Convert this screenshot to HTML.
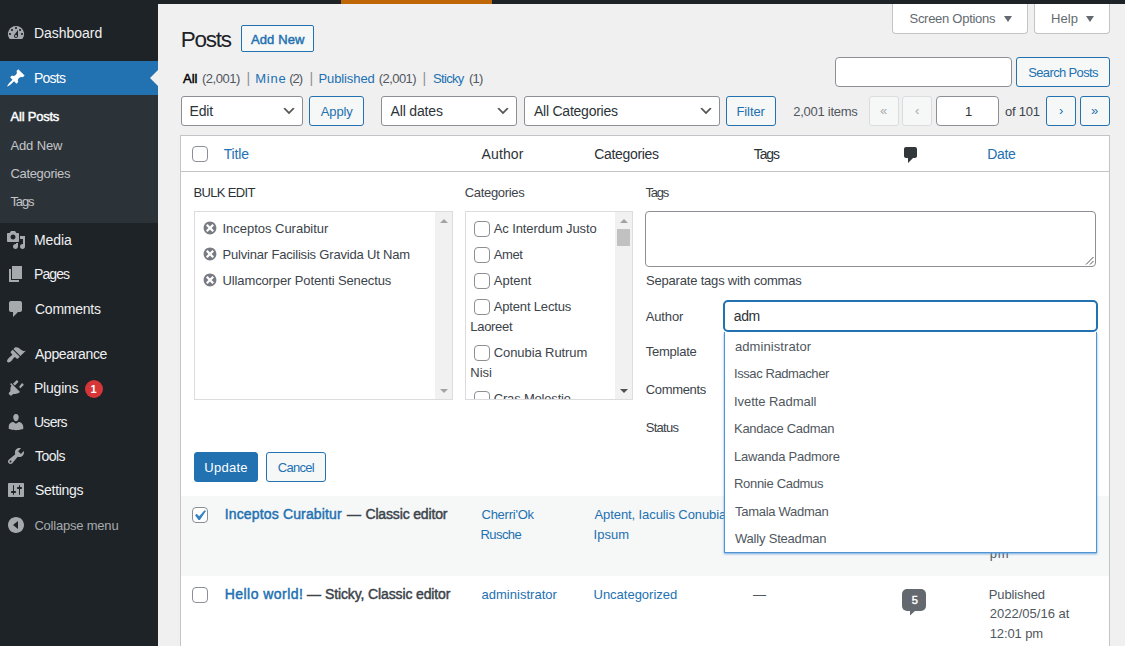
<!DOCTYPE html>
<html lang="en">
<head>
<meta charset="utf-8">
<title>Posts</title>
<style>
*{box-sizing:border-box;margin:0;padding:0}
html,body{width:1125px;height:646px;overflow:hidden;background:#f0f0f1}
body{position:relative;font-family:"Liberation Sans",sans-serif;font-size:13px;color:#3c434a;line-height:20px}
.a{position:absolute}
.t{position:absolute;white-space:nowrap;line-height:20px;font-size:13px}
#side{left:0;top:0;width:158px;height:646px;background:#1d2327}
#topbar{left:0;top:0;width:1125px;height:4px;background:#1d2327}
#orange{left:341px;top:0;width:151px;height:4px;background:#bf6606}
#cur{left:0;top:61px;width:158px;height:34px;background:#2271b1}
#cur:after{content:"";position:absolute;right:0;top:9px;border:8px solid transparent;border-right-color:#f0f0f1}
#sub{left:0;top:95px;width:158px;height:128px;background:#2c3338}
.ic{position:absolute;left:6px;width:20px;height:20px;fill:#a7aaad}
.badge{left:85px;top:380px;width:18px;height:18px;border-radius:9px;background:#d63638}
.btn{position:absolute;border:1px solid #2271b1;border-radius:3px;background:#f6f7f7}
.sel{position:absolute;top:96px;height:30px;border:1px solid #8c8f94;border-radius:3px;background:#fff}
.sel svg{position:absolute;right:5px;top:6px;width:16px;height:16px}
.inp{position:absolute;border:1px solid #8c8f94;border-radius:4px;background:#fff}
.cb{position:absolute;width:16px;height:16px;border:1px solid #8c8f94;border-radius:4px;background:#fff}
.pg{position:absolute;top:96px;height:30px;border-radius:3px}
.pg.dis{border:1px solid #dcdcde;background:#f6f7f7}
.pg.en{border:1px solid #2271b1;background:#f6f7f7}
.tab{position:absolute;top:4px;height:30px;border:1px solid #c3c4c7;border-top:none;border-radius:0 0 4px 4px;background:#fff}
.tri{position:absolute;width:0;height:0;border-left:4px solid transparent;border-right:4px solid transparent;border-top:6px solid #646970}
.box{position:absolute;top:211px;height:189px;border:1px solid #dcdcde;background:#fff}
.sb{position:absolute;top:0;right:0;width:17px;height:187px;background:#f1f1f1}
.dm{position:absolute;left:202px;width:16px;height:16px}
</style>
</head>
<body>
<div class="a" id="side"></div>
<div class="a" id="topbar"></div>
<div class="a" id="orange"></div>
<div class="a" id="cur"></div>
<div class="a" id="sub"></div>

<!-- sidebar icons -->
<svg class="ic" style="top:23px" viewBox="0 0 20 20"><path d="M3.76 16h12.48A7.998 7.998 0 0 0 10 3a7.998 7.998 0 0 0-6.24 13zM10 4c.55 0 1 .45 1 1s-.45 1-1 1-1-.45-1-1 .45-1 1-1zM6 6c.55 0 1 .45 1 1s-.45 1-1 1-1-.45-1-1 .45-1 1-1zm8 0c.55 0 1 .45 1 1s-.45 1-1 1-1-.45-1-1 .45-1 1-1zm-5.37 5.55L12 7v6c0 1.1-.9 2-2 2s-2-.9-2-2c0-.57.24-1.08.63-1.45zM4 10c.55 0 1 .45 1 1s-.45 1-1 1-1-.45-1-1 .45-1 1-1zm12 0c.55 0 1 .45 1 1s-.45 1-1 1-1-.45-1-1 .45-1 1-1zm-5 3c0-.55-.45-1-1-1s-1 .45-1 1 .45 1 1 1 1-.45 1-1z"/></svg>
<svg class="ic" style="top:68px;fill:#fff" viewBox="0 0 20 20"><path d="M10.44 3.02l1.82-1.82 6.36 6.35-1.83 1.82c-1.05-.68-2.48-.57-3.41.36l-.75.75c-.92.93-1.04 2.35-.35 3.41l-1.83 1.82-2.41-2.41-2.8 2.79c-.42.42-3.38 2.71-3.8 2.29s1.86-3.39 2.28-3.81l2.79-2.79L4.1 9.36l1.83-1.82c1.05.69 2.48.57 3.4-.36l.75-.75c.93-.92 1.05-2.35.36-3.41z"/></svg>
<svg class="ic" style="top:230px" viewBox="0 0 20 20"><path d="M13 11V4c0-.55-.45-1-1-1h-1.67L9 1H5L3.67 3H2c-.55 0-1 .45-1 1v7c0 .55.45 1 1 1h10c.55 0 1-.45 1-1zM7 4.5c1.38 0 2.5 1.12 2.5 2.5S8.38 9.5 7 9.5 4.5 8.38 4.5 7 5.62 4.5 7 4.5zM14 6h5v10.5c0 1.38-1.12 2.5-2.5 2.5S14 17.88 14 16.5s1.12-2.5 2.5-2.5c.17 0 .34.02.5.05V9h-3V6zm-4 8.050V13h2v3.5c0 1.38-1.12 2.5-2.5 2.5S7 17.88 7 16.5 8.120 14 9.5 14c.17 0 .34.02.5.05z"/></svg>
<svg class="ic" style="top:264px" viewBox="0 0 20 20"><path d="M6 15V2h10v13H6zm-1 1h8v2H3V5h2v11z"/></svg>
<svg class="ic" style="top:299px" viewBox="0 0 20 20"><path d="M5 2h9c1.1 0 2 .9 2 2v7c0 1.1-.9 2-2 2h-2l-5 5v-5H5c-1.1 0-2-.9-2-2V4c0-1.1.9-2 2-2z"/></svg>
<svg class="ic" style="top:344.5px" viewBox="0 0 20 20"><path d="M14.48 11.06L7.41 3.99l1.5-1.5c.5-.56 2.3-.47 3.51.32 1.21.8 1.43 1.28 2.91 2.1 1.18.64 2.45 1.26 4.45.85zm-.71.71L6.7 4.7 4.93 6.47c-.39.39-.39 1.02 0 1.410l1.060 1.060c.39.39.39 1.030 0 1.420-.6.6-1.430 1.110-2.210 1.690-.35.26-.7.53-1.010.84C1.430 14.230.4 16.080 1.4 17.070c.99 1 2.840-.030 4.180-1.360.31-.31.58-.66.85-1.020.57-.78 1.080-1.610 1.690-2.210.39-.39 1.020-.39 1.410 0l1.060 1.060c.39.39 1.020.39 1.410 0z"/></svg>
<svg class="ic" style="top:378px;left:5px" viewBox="0 0 20 20"><path d="M13.11 4.36L9.87 7.6 8 5.73l3.24-3.24c.35-.34 1.05-.2 1.56.32.52.51.66 1.21.31 1.55zm-8 1.770l.91-1.120 9.010 9.010-1.190.84c-.71.71-2.630 1.160-3.820 1.160H8.100l-1.250 1.260c-.5.5-1.340.5-1.830 0l-.91-.91c-.49-.49-.49-1.320 0-1.830l1.260-1.260v-1.910c0-1.190.45-3.110 1.160-3.820zm9.010 2.630L16.590 5.500c.34-.35 1.040-.21 1.560.31.51.52.65 1.210.31 1.560l-3.240 3.240z"/></svg>
<div class="a badge"></div>
<svg class="ic" style="top:412px" viewBox="0 0 20 20"><path d="M10 9.25c-2.27 0-2.73-3.44-2.73-3.44C7 4.020 7.820 2 9.970 2c2.160 0 2.980 2.020 2.710 3.810 0 0-.41 3.440-2.680 3.440zm0 2.570L12.720 10c2.390 0 4.520 2.330 4.520 4.530v2.490s-3.650 1.130-7.240 1.130c-3.650 0-7.240-1.130-7.240-1.130v-2.490c0-2.250 1.940-4.480 4.470-4.480z"/></svg>
<svg class="ic" style="top:446px" viewBox="0 0 20 20"><path d="M16.68 9.770c-1.340 1.340-3.300 1.670-4.950.99l-5.410 6.520c-.99.99-2.590.99-3.580 0s-.99-2.590 0-3.570l6.520-5.420c-.68-1.650-.35-3.610.99-4.950 1.280-1.280 3.120-1.620 4.720-1.060l-2.890 2.890 2.820 2.820 2.860-2.870c.53 1.580.18 3.390-1.080 4.650zM3.810 16.210c.4.39 1.040.39 1.430 0 .4-.4.4-1.040 0-1.430-.39-.4-1.030-.4-1.430 0-.39.39-.39 1.030 0 1.430z"/></svg>
<svg class="ic" style="top:480px" viewBox="0 0 20 20"><path d="M18 16V4c0-.55-.45-1-1-1H3c-.55 0-1 .45-1 1v12c0 .55.45 1 1 1h14c.55 0 1-.45 1-1zM8 11h1c.55 0 1 .45 1 1s-.45 1-1 1H8v1.500c0 .28-.22.5-.5.5s-.5-.22-.5-.5V13H6c-.55 0-1-.45-1-1s.45-1 1-1h1V5.500c0-.28.22-.5.5-.5s.5.22.5.5V11zm5-2h-1c-.55 0-1-.45-1-1s.45-1 1-1h1V5.500c0-.28.22-.5.5-.5s.5.22.5.5V7h1c.55 0 1 .45 1 1s-.45 1-1 1h-1v5.500c0 .28-.22.5-.5.5s-.5-.22-.5-.5V9z"/></svg>
<svg class="ic" style="top:515px" viewBox="0 0 20 20"><path d="M10 2c4.420 0 8 3.580 8 8s-3.580 8-8 8-8-3.580-8-8 3.580-8 8-8zm2 12V6l-5 4z"/></svg>

<!-- screen options / help -->
<div class="tab" style="left:892px;width:136px"></div>
<div class="tab" style="left:1034px;width:76px"></div>
<div class="tri" style="left:1004px;top:16px"></div>
<div class="tri" style="left:1086px;top:16px"></div>

<!-- heading button -->
<div class="btn" style="left:241px;top:25px;width:73px;height:27px;border-radius:2px"></div>
<!-- search -->
<div class="inp" style="left:835px;top:57px;width:177px;height:30px"></div>
<div class="btn" style="left:1016px;top:57px;width:94px;height:30px"></div>
<!-- tablenav -->
<div class="sel" style="left:181px;width:122px"><svg viewBox="0 0 20 20"><path d="M5 6l5 5 5-5 2 1-7 7-7-7 2-1z" fill="#555"/></svg></div>
<div class="btn" style="left:309px;top:96px;width:55px;height:30px"></div>
<div class="sel" style="left:381px;width:136px"><svg viewBox="0 0 20 20"><path d="M5 6l5 5 5-5 2 1-7 7-7-7 2-1z" fill="#555"/></svg></div>
<div class="sel" style="left:524px;width:196px"><svg viewBox="0 0 20 20"><path d="M5 6l5 5 5-5 2 1-7 7-7-7 2-1z" fill="#555"/></svg></div>
<div class="btn" style="left:726px;top:96px;width:50px;height:30px"></div>
<div class="pg dis" style="left:869px;width:30px"></div>
<div class="pg dis" style="left:902px;width:30px"></div>
<div class="inp" style="left:936px;top:96px;width:63px;height:30px"></div>
<div class="pg en" style="left:1046px;width:30px"></div>
<div class="pg en" style="left:1080px;width:30px"></div>
<span class="t" style="left:880px;top:101px;font-size:13px;color:#a7aaad">«</span>
<span class="t" style="left:915px;top:101px;font-size:13px;color:#a7aaad">‹</span>
<span class="t" style="left:1059px;top:101px;font-size:13px;color:#2271b1">›</span>
<span class="t" style="left:1091px;top:101px;font-size:13px;color:#2271b1">»</span>

<!-- table -->
<div class="a" style="left:180px;top:135px;width:930px;height:521px;border:1px solid #c3c4c7;background:#fff"></div>
<div class="a" style="left:181px;top:171px;width:928px;height:1px;background:#c3c4c7"></div>
<div class="a" style="left:181px;top:496px;width:928px;height:80px;background:#f6f7f7"></div>
<div class="cb" style="left:192px;top:146px"></div>
<svg class="a" style="left:901px;top:145px;width:20px;height:20px" viewBox="0 0 20 20"><path fill="#32373c" d="M5 2h9c1.1 0 2 .9 2 2v7c0 1.1-.9 2-2 2h-2l-5 5v-5H5c-1.1 0-2-.9-2-2V4c0-1.1.9-2 2-2z"/></svg>

<!-- bulk edit boxes -->
<div class="box" style="left:194px;width:259px"><div class="sb"></div>
 <svg class="a" style="left:245px;top:7px;width:8px;height:4px" viewBox="0 0 8 4"><path d="M0 4L4 0l4 4z" fill="#a3a3a3"/></svg>
 <svg class="a" style="left:245px;top:177px;width:8px;height:4px" viewBox="0 0 8 4"><path d="M0 0l4 4 4-4z" fill="#a3a3a3"/></svg>
</div>
<svg class="dm" style="top:220px" viewBox="0 0 20 20"><path fill="#787c82" d="M10 2c4.420 0 8 3.580 8 8s-3.580 8-8 8-8-3.580-8-8 3.580-8 8-8zm5 11l-3-3 3-3-2-2-3 3-3-3-2 2 3 3-3 3 2 2 3-3 3 3z"/></svg>
<svg class="dm" style="top:246px" viewBox="0 0 20 20"><path fill="#787c82" d="M10 2c4.420 0 8 3.580 8 8s-3.580 8-8 8-8-3.580-8-8 3.580-8 8-8zm5 11l-3-3 3-3-2-2-3 3-3-3-2 2 3 3-3 3 2 2 3-3 3 3z"/></svg>
<svg class="dm" style="top:272px" viewBox="0 0 20 20"><path fill="#787c82" d="M10 2c4.420 0 8 3.580 8 8s-3.580 8-8 8-8-3.580-8-8 3.580-8 8-8zm5 11l-3-3 3-3-2-2-3 3-3-3-2 2 3 3-3 3 2 2 3-3 3 3z"/></svg>

<div class="box" style="left:465px;width:168px"><div class="sb"></div>
 <div class="a" style="right:2px;top:17px;width:13px;height:17px;background:#c1c1c1"></div>
 <svg class="a" style="left:154px;top:7px;width:8px;height:4px" viewBox="0 0 8 4"><path d="M0 4L4 0l4 4z" fill="#a3a3a3"/></svg>
 <svg class="a" style="left:154px;top:177px;width:8px;height:4px" viewBox="0 0 8 4"><path d="M0 0l4 4 4-4z" fill="#505050"/></svg>
</div>
<div class="cb" style="left:474px;top:221px"></div>
<div class="cb" style="left:474px;top:247px"></div>
<div class="cb" style="left:474px;top:273px"></div>
<div class="cb" style="left:474px;top:299px"></div>
<div class="cb" style="left:474px;top:345px"></div>
<div class="a" style="left:0;top:0;width:1125px;height:399px;overflow:hidden">
<div class="cb" style="left:474px;top:391px"></div>
<span class="t" style="left:493.75px;top:389px;font-size:13px;color:#3c434a;letter-spacing:-0.186px">Cras Molestie</span>
</div>

<!-- tags textarea -->
<div class="inp" style="left:645px;top:211px;width:451px;height:56px"></div>
<svg class="a" style="left:1084px;top:255px;width:10px;height:10px" viewBox="0 0 10 10"><path d="M2 9.500L9.500 2M6 9.500L9.500 6" stroke="#555" stroke-width="1" fill="none"/></svg>
<!-- author input -->
<div class="a" style="left:723px;top:300px;width:375px;height:32px;border:2px solid #2271b1;border-radius:5px;background:#fff"></div>

<!-- buttons -->
<div class="btn" style="left:194px;top:452px;width:64px;height:30px;background:#2271b1"></div>
<div class="btn" style="left:266px;top:452px;width:60px;height:30px"></div>

<!-- rows -->
<div class="cb" style="left:192px;top:507px"></div>
<svg class="a" style="left:189px;top:505px;width:21px;height:21px" viewBox="0 0 20 20"><path d="M14.83 4.890l1.340.94-5.810 8.380H9.020L5.780 9.670l1.340-1.250 2.570 2.400z" fill="#3582c4"/></svg>
<div class="cb" style="left:192px;top:587px"></div>
<!-- comment bubble -->
<div class="a" style="left:902px;top:589px;width:24px;height:22px;border-radius:5px;background:#646970"></div>
<svg class="a" style="left:910px;top:610px;width:8px;height:6px" viewBox="0 0 8 6"><path d="M0 0h6L0 5.500z" fill="#646970"/></svg>
<span class="t" style="left:90.500px;top:379px;font-size:11px;font-weight:bold;color:#fff">1</span>

<span class="t" style="left:34.00px;top:23px;font-size:14px;color:#f0f0f1;letter-spacing:-0.038px">Dashboard</span>
<span class="t" style="left:34.00px;top:68px;font-size:14px;color:#fff;letter-spacing:-0.753px">Posts</span>
<span class="t" style="left:10.62px;top:107px;font-size:13px;color:#fff;letter-spacing:-0.240px;-webkit-text-stroke:0.45px">All Posts</span>
<span class="t" style="left:10.40px;top:136px;font-size:13px;color:#c3c4c7;letter-spacing:-0.127px">Add New</span>
<span class="t" style="left:10.40px;top:164px;font-size:13px;color:#c3c4c7;letter-spacing:-0.307px">Categories</span>
<span class="t" style="left:10.40px;top:192px;font-size:13px;color:#c3c4c7;letter-spacing:-1.120px">Tags</span>
<span class="t" style="left:34.00px;top:230px;font-size:14px;color:#f0f0f1;letter-spacing:-0.086px">Media</span>
<span class="t" style="left:34.00px;top:264px;font-size:14px;color:#f0f0f1;letter-spacing:-0.924px">Pages</span>
<span class="t" style="left:35.00px;top:299px;font-size:14px;color:#f0f0f1;letter-spacing:-0.240px">Comments</span>
<span class="t" style="left:35.00px;top:344px;font-size:14px;color:#f0f0f1;letter-spacing:-0.346px">Appearance</span>
<span class="t" style="left:34.00px;top:378px;font-size:14px;color:#f0f0f1;letter-spacing:-0.219px">Plugins</span>
<span class="t" style="left:34.00px;top:412px;font-size:14px;color:#f0f0f1;letter-spacing:-0.740px">Users</span>
<span class="t" style="left:35.00px;top:446px;font-size:14px;color:#f0f0f1;letter-spacing:-0.521px">Tools</span>
<span class="t" style="left:35.00px;top:480px;font-size:14px;color:#f0f0f1;letter-spacing:-0.284px">Settings</span>
<span class="t" style="left:34.40px;top:516px;font-size:13px;color:#a7aaad;letter-spacing:-0.207px">Collapse menu</span>
<span class="t" style="left:180.75px;top:30px;font-size:22.5px;color:#1d2327;letter-spacing:-1.255px">Posts</span>
<span class="t" style="left:250.97px;top:30px;font-size:13px;color:#2271b1;letter-spacing:0.115px;-webkit-text-stroke:0.45px">Add New</span>
<span class="t" style="left:183.03px;top:69px;font-size:13px;color:#000;-webkit-text-stroke:0.45px">All</span>
<span class="t" style="left:202.00px;top:69px;font-size:13px;color:#50575e;letter-spacing:-0.477px">(2,001)</span>
<span class="t" style="left:246.50px;top:68px;font-size:14px;color:#8c8f94">|</span>
<span class="t" style="left:255.25px;top:69px;font-size:13px;color:#2271b1;letter-spacing:0.768px">Mine</span>
<span class="t" style="left:289.25px;top:69px;font-size:13px;color:#50575e;letter-spacing:-1.030px">(2)</span>
<span class="t" style="left:309.50px;top:68px;font-size:14px;color:#8c8f94">|</span>
<span class="t" style="left:318.50px;top:69px;font-size:13px;color:#2271b1;letter-spacing:-0.108px">Published</span>
<span class="t" style="left:378.75px;top:69px;font-size:13px;color:#50575e;letter-spacing:-0.560px">(2,001)</span>
<span class="t" style="left:422.50px;top:68px;font-size:14px;color:#8c8f94">|</span>
<span class="t" style="left:433.00px;top:69px;font-size:13px;color:#2271b1;letter-spacing:-0.674px">Sticky</span>
<span class="t" style="left:469.00px;top:69px;font-size:13px;color:#50575e;letter-spacing:-0.780px">(1)</span>
<span class="t" style="left:909.50px;top:9px;font-size:13px;color:#646970;letter-spacing:-0.277px">Screen Options</span>
<span class="t" style="left:1051.00px;top:9px;font-size:13px;color:#646970;letter-spacing:0.081px">Help</span>
<span class="t" style="left:1028.25px;top:63px;font-size:13px;color:#2271b1;letter-spacing:-0.642px">Search Posts</span>
<span class="t" style="left:189.50px;top:101px;font-size:14px;color:#2c3338;letter-spacing:-0.161px">Edit</span>
<span class="t" style="left:320.75px;top:102px;font-size:13px;color:#2271b1;letter-spacing:-0.130px">Apply</span>
<span class="t" style="left:390.50px;top:101px;font-size:14px;color:#2c3338;letter-spacing:-0.150px">All dates</span>
<span class="t" style="left:534.00px;top:101px;font-size:14px;color:#2c3338;letter-spacing:-0.242px">All Categories</span>
<span class="t" style="left:736.50px;top:102px;font-size:13px;color:#2271b1;letter-spacing:-0.112px">Filter</span>
<span class="t" style="left:793.25px;top:102px;font-size:13px;color:#50575e;letter-spacing:-0.270px">2,001 items</span>
<span class="t" style="left:965.00px;top:102px;font-size:13px;color:#2c3338">1</span>
<span class="t" style="left:1005.00px;top:102px;font-size:13px;color:#3c434a;letter-spacing:-0.233px">of 101</span>
<span class="t" style="left:223.75px;top:144px;font-size:14px;color:#2271b1;letter-spacing:-0.161px">Title</span>
<span class="t" style="left:481.50px;top:144px;font-size:14px;color:#2c3338;letter-spacing:0.133px">Author</span>
<span class="t" style="left:594.25px;top:144px;font-size:14px;color:#2c3338;letter-spacing:-0.328px">Categories</span>
<span class="t" style="left:753.75px;top:144px;font-size:14px;color:#2c3338;letter-spacing:-1.107px">Tags</span>
<span class="t" style="left:987.25px;top:144px;font-size:14px;color:#2271b1;letter-spacing:-0.345px">Date</span>
<span class="t" style="left:193.50px;top:183px;font-size:13px;color:#2c3338;letter-spacing:-0.655px">BULK EDIT</span>
<span class="t" style="left:464.75px;top:183px;font-size:13px;color:#3c434a;letter-spacing:-0.319px">Categories</span>
<span class="t" style="left:645.50px;top:183px;font-size:13px;color:#3c434a;letter-spacing:-1.237px">Tags</span>
<span class="t" style="left:222.50px;top:219px;font-size:13px;color:#3c434a;letter-spacing:-0.023px">Inceptos Curabitur</span>
<span class="t" style="left:222.50px;top:245px;font-size:13px;color:#3c434a;letter-spacing:-0.188px">Pulvinar Facilisis Gravida Ut Nam</span>
<span class="t" style="left:222.50px;top:271px;font-size:13px;color:#3c434a;letter-spacing:-0.119px">Ullamcorper Potenti Senectus</span>
<span class="t" style="left:493.75px;top:219px;font-size:13px;color:#3c434a;letter-spacing:-0.112px">Ac Interdum Justo</span>
<span class="t" style="left:493.75px;top:245px;font-size:13px;color:#3c434a;letter-spacing:-0.410px">Amet</span>
<span class="t" style="left:493.75px;top:271px;font-size:13px;color:#3c434a;letter-spacing:0.005px">Aptent</span>
<span class="t" style="left:493.75px;top:297px;font-size:13px;color:#3c434a;letter-spacing:-0.167px">Aptent Lectus</span>
<span class="t" style="left:470.25px;top:317px;font-size:13px;color:#3c434a;letter-spacing:-0.288px">Laoreet</span>
<span class="t" style="left:493.75px;top:343px;font-size:13px;color:#3c434a;letter-spacing:-0.083px">Conubia Rutrum</span>
<span class="t" style="left:470.25px;top:363px;font-size:13px;color:#3c434a;letter-spacing:-0.009px">Nisi</span>
<span class="t" style="left:646.00px;top:271px;font-size:13px;color:#3c434a;letter-spacing:-0.192px">Separate tags with commas</span>
<span class="t" style="left:645.75px;top:307px;font-size:13px;color:#3c434a;letter-spacing:-0.145px">Author</span>
<span class="t" style="left:645.75px;top:342px;font-size:13px;color:#3c434a;letter-spacing:-0.253px">Template</span>
<span class="t" style="left:645.75px;top:380px;font-size:13px;color:#3c434a;letter-spacing:-0.335px">Comments</span>
<span class="t" style="left:645.75px;top:418px;font-size:13px;color:#3c434a;letter-spacing:-0.721px">Status</span>
<span class="t" style="left:733.75px;top:306px;font-size:14px;color:#2c3338;letter-spacing:-0.411px">adm</span>
<span class="t" style="left:204.25px;top:458px;font-size:13px;color:#fff;letter-spacing:0.262px">Update</span>
<span class="t" style="left:277.75px;top:458px;font-size:13px;color:#2271b1;letter-spacing:-0.716px">Cancel</span>
<span class="t" style="left:224.72px;top:504px;font-size:14px;color:#2271b1;letter-spacing:0.151px;-webkit-text-stroke:0.45px">Inceptos Curabitur</span>
<span class="t" style="left:346.98px;top:504px;font-size:14px;color:#3c434a;-webkit-text-stroke:0.45px">—</span>
<span class="t" style="left:365.48px;top:504px;font-size:14px;color:#3c434a;letter-spacing:-0.159px;-webkit-text-stroke:0.45px">Classic editor</span>
<span class="t" style="left:481.50px;top:505px;font-size:13px;color:#2271b1;letter-spacing:-0.249px">Cherri'Ok</span>
<span class="t" style="left:480.50px;top:525px;font-size:13px;color:#2271b1;letter-spacing:-0.570px">Rusche</span>
<span class="t" style="left:594.50px;top:505px;font-size:13px;color:#2271b1;letter-spacing:-0.089px">Aptent, Iaculis Conubia</span>
<span class="t" style="left:593.50px;top:525px;font-size:13px;color:#2271b1;letter-spacing:0.045px">Ipsum</span>
<span class="t" style="left:989.75px;top:544px;font-size:13px;color:#50575e;letter-spacing:0.770px">pm</span>
<span class="t" style="left:224.72px;top:584px;font-size:14px;color:#2271b1;letter-spacing:0.459px;-webkit-text-stroke:0.45px">Hello world!</span>
<span class="t" style="left:306.98px;top:584px;font-size:14px;color:#3c434a;-webkit-text-stroke:0.45px">—</span>
<span class="t" style="left:324.98px;top:584px;font-size:14px;color:#3c434a;letter-spacing:-0.126px;-webkit-text-stroke:0.45px">Sticky, Classic editor</span>
<span class="t" style="left:481.50px;top:585px;font-size:13px;color:#2271b1;letter-spacing:0.016px">administrator</span>
<span class="t" style="left:593.50px;top:585px;font-size:13px;color:#2271b1;letter-spacing:-0.008px">Uncategorized</span>
<span class="t" style="left:753.00px;top:585px;font-size:13px;color:#50575e">—</span>
<span class="t" style="left:911.83px;top:590px;font-size:11px;color:#fff;-webkit-text-stroke:0.45px">5</span>
<span class="t" style="left:988.75px;top:585px;font-size:13px;color:#50575e;letter-spacing:-0.108px">Published</span>
<span class="t" style="left:989.75px;top:604px;font-size:13px;color:#50575e;letter-spacing:0.008px">2022/05/16 at</span>
<span class="t" style="left:989.75px;top:624px;font-size:13px;color:#50575e;letter-spacing:-0.125px">12:01 pm</span>

<!-- autocomplete dropdown -->
<div class="a" style="left:724px;top:332px;width:373px;height:221px;border:1px solid #4f94d4;border-top:none;background:#fff;box-shadow:0 1px 2px rgba(79,148,212,.8)"></div>
<span class="t" style="left:735.00px;top:337px;font-size:13px;color:#50575e;letter-spacing:0.078px">administrator</span>
<span class="t" style="left:734.00px;top:364px;font-size:13px;color:#50575e;letter-spacing:-0.416px">Issac Radmacher</span>
<span class="t" style="left:734.00px;top:392px;font-size:13px;color:#50575e;letter-spacing:-0.054px">Ivette Radmall</span>
<span class="t" style="left:734.00px;top:419px;font-size:13px;color:#50575e;letter-spacing:-0.276px">Kandace Cadman</span>
<span class="t" style="left:734.00px;top:447px;font-size:13px;color:#50575e;letter-spacing:-0.228px">Lawanda Padmore</span>
<span class="t" style="left:734.00px;top:474px;font-size:13px;color:#50575e;letter-spacing:-0.310px">Ronnie Cadmus</span>
<span class="t" style="left:735.00px;top:502px;font-size:13px;color:#50575e;letter-spacing:-0.277px">Tamala Wadman</span>
<span class="t" style="left:735.00px;top:529px;font-size:13px;color:#50575e;letter-spacing:-0.203px">Wally Steadman</span>
</body>
</html>
